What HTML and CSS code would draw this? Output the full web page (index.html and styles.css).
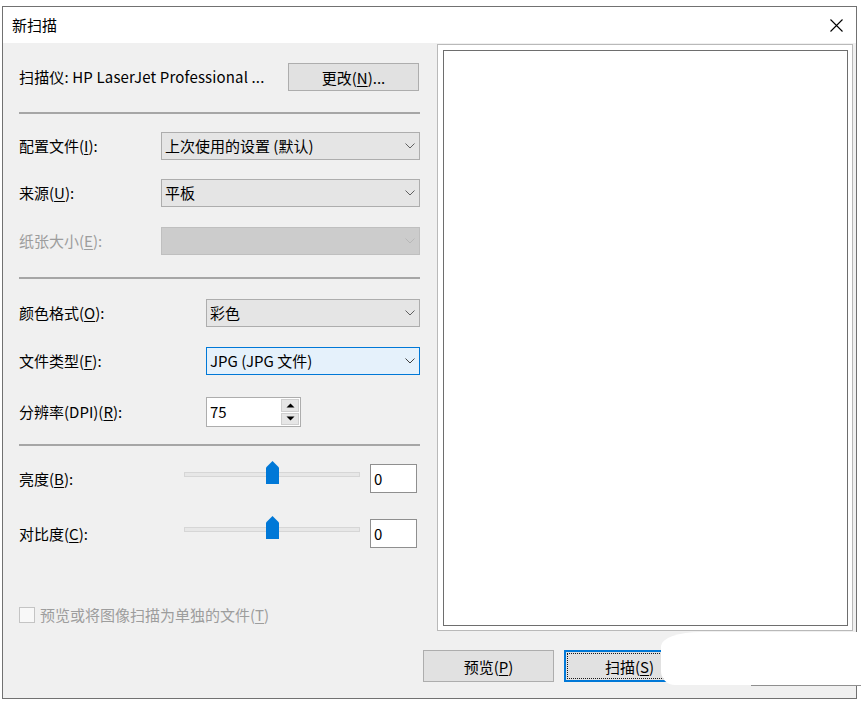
FILE: index.html
```html
<!DOCTYPE html>
<html lang="zh-CN">
<head>
<meta charset="utf-8">
<title>新扫描</title>
<link rel="stylesheet" href="styles.css">
</head>
<body>
<div class="window">
  <div class="titlebar">
    <span class="title">新扫描</span>
    <svg class="close" width="13" height="13" viewBox="0 0 13 13"><path d="M0.5 0.5L12.5 12.5M12.5 0.5L0.5 12.5" stroke="#000" stroke-width="1.1" fill="none"/></svg>
  </div>
  <div class="content">
    <div class="main">
      <div class="left">
        <div class="row scanner">
          <span class="label grow scanner-name">扫描仪: HP LaserJet Professional ...</span>
          <button class="btn change">更改(<u>N</u>)...</button>
        </div>
        <div class="sep m21"></div>

        <div class="row m18">
          <span class="label w1">配置文件(<u>I</u>):</span>
          <div class="combo"><span>上次使用的设置 (默认)</span><svg class="chev" width="10" height="6" viewBox="0 0 10 6"><path d="M0.5 0.5L5 5L9.5 0.5" stroke="#606060" fill="none"/></svg></div>
        </div>
        <div class="row m19">
          <span class="label w1">来源(<u>U</u>):</span>
          <div class="combo"><span>平板</span><svg class="chev" width="10" height="6" viewBox="0 0 10 6"><path d="M0.5 0.5L5 5L9.5 0.5" stroke="#606060" fill="none"/></svg></div>
        </div>
        <div class="row m20">
          <span class="label w1 disabled">纸张大小(<u>E</u>):</span>
          <div class="combo off"><span></span><svg class="chev" width="10" height="6" viewBox="0 0 10 6"><path d="M0.5 0.5L5 5L9.5 0.5" stroke="#b8b8b8" fill="none"/></svg></div>
        </div>
        <div class="sep m22"></div>

        <div class="row m20">
          <span class="label w2">颜色格式(<u>O</u>):</span>
          <div class="combo"><span>彩色</span><svg class="chev" width="10" height="6" viewBox="0 0 10 6"><path d="M0.5 0.5L5 5L9.5 0.5" stroke="#606060" fill="none"/></svg></div>
        </div>
        <div class="row m20">
          <span class="label w2">文件类型(<u>F</u>):</span>
          <div class="combo focus"><span>JPG (JPG 文件)</span><svg class="chev" width="10" height="6" viewBox="0 0 10 6"><path d="M0.5 0.5L5 5L9.5 0.5" stroke="#404040" fill="none"/></svg></div>
        </div>
        <div class="row m22 tall">
          <span class="label w2">分辨率(DPI)(<u>R</u>):</span>
          <div class="spin">
            <span class="spin-value">75</span>
            <div class="spin-btns">
              <span class="spin-btn"><svg width="9" height="5" viewBox="0 0 9 5"><path d="M0.5 4.5L4.5 0.5L8.5 4.5Z" fill="#000"/></svg></span>
              <span class="spin-btn"><svg width="9" height="5" viewBox="0 0 9 5"><path d="M0.5 0.5L4.5 4.5L8.5 0.5Z" fill="#000"/></svg></span>
            </div>
          </div>
        </div>
        <div class="sep m17"></div>

        <div class="row m18 srow">
          <span class="label w3">亮度(<u>B</u>):</span>
          <div class="slider">
            <div class="track"></div>
            <svg class="thumb" width="13" height="23" viewBox="0 0 13 23"><path d="M0 6.5L6.5 0L13 6.5V23H0Z" fill="#0078d7"/></svg>
          </div>
          <div class="valbox">0</div>
        </div>
        <div class="row m26 srow">
          <span class="label w3">对比度(<u>C</u>):</span>
          <div class="slider">
            <div class="track"></div>
            <svg class="thumb" width="13" height="23" viewBox="0 0 13 23"><path d="M0 6.5L6.5 0L13 6.5V23H0Z" fill="#0078d7"/></svg>
          </div>
          <div class="valbox">0</div>
        </div>

        <div class="row m59 chkrow">
          <span class="checkbox"></span>
          <span class="label disabled">预览或将图像扫描为单独的文件(<u>T</u>)</span>
        </div>
      </div>
      <div class="preview">
        <div class="preview-inner"></div>
      </div>
    </div>
    <div class="footer">
      <button class="btn big">预览(<u>P</u>)</button>
      <button class="btn big default">扫描(<u>S</u>)</button>
      <button class="btn big">取消</button>
    </div>
  </div>
</div>
<div class="watermark"></div>
</body>
</html>
```
FILE: styles.css
```css
html, body {
  margin: 0;
  padding: 0;
  background: #ffffff;
}
body {
  font-family: "Noto Sans CJK SC", "Noto Sans", sans-serif;
  font-size: 15px;
  color: #000;
  position: relative;
  width: 861px;
  height: 711px;
  overflow: hidden;
}
.window {
  margin: 6px 0 0 2px;
  width: 855px;
  height: 693px;
  box-sizing: border-box;
  border: 1px solid #717171;
  background: #f0f0f0;
  display: flex;
  flex-direction: column;
}
.titlebar {
  height: 36px;
  flex: none;
  background: #ffffff;
  display: flex;
  align-items: center;
  justify-content: space-between;
  padding: 0 13px 0 9px;
}
.title {
  line-height: 20px;
}
.content {
  flex: 1;
  display: flex;
  flex-direction: column;
}
.main {
  display: flex;
  height: 588px;
  flex: none;
}
.left {
  width: 434px;
  box-sizing: border-box;
  padding: 0 17px 0 16px;
  display: flex;
  flex-direction: column;
}
.row {
  display: flex;
  align-items: center;
  height: 28px;
  flex: none;
}
.row.tall { height: 30px; }
.row.srow { height: 29px; }
.scanner { margin-top: 20px; }
.scanner-name { letter-spacing: 0.15px; }
.m17 { margin-top: 17px; }
.m18 { margin-top: 18px; }
.m19 { margin-top: 19px; }
.m20 { margin-top: 20px; }
.m21 { margin-top: 21px; }
.m22 { margin-top: 22px; }
.m26 { margin-top: 26px; }
.m59 { margin-top: 59px; }
.label {
  white-space: nowrap;
  line-height: 20px;
}
.grow { flex: 1; }
.w1 { width: 142px; flex: none; }
.w2 { width: 187px; flex: none; }
.w3 { width: 165px; flex: none; }
.disabled { color: #9d9d9d; }
u { text-decoration-thickness: 1px; text-underline-offset: 2px; }
.sep {
  height: 2px;
  flex: none;
  background: #a6a6a6;
}
.btn {
  font-family: inherit;
  font-size: 15px;
  color: #000;
  background: #e1e1e1;
  border: 1px solid #adadad;
  box-sizing: border-box;
  padding: 0;
  margin: 0;
}
.change {
  width: 131px;
  height: 28px;
  margin-right: 1px;
}
.combo {
  flex: 1;
  height: 28px;
  box-sizing: border-box;
  border: 1px solid #adadad;
  background: #e5e5e5;
  display: flex;
  align-items: center;
  justify-content: space-between;
  padding: 0 4px 0 3px;
  line-height: 20px;
  white-space: nowrap;
}
.combo.off {
  background: #cccccc;
  border-color: #bfbfbf;
}
.combo.focus {
  background: #e5f1fb;
  border-color: #0078d7;
}
.chev { flex: none; }
.spin {
  width: 95px;
  height: 30px;
  box-sizing: border-box;
  border: 1px solid #adadad;
  background: #ffffff;
  display: flex;
}
.spin-value {
  flex: 1;
  padding-left: 3px;
  line-height: 28px;
}
.spin-btns {
  width: 19px;
  display: flex;
  flex-direction: column;
  padding: 1px 1px 1px 0;
  box-sizing: border-box;
  gap: 1px;
}
.spin-btn {
  flex: 1;
  background: #e6e6e6;
  border: 1px solid #cfcfcf;
  display: flex;
  align-items: center;
  justify-content: center;
}
.spin-btn svg { display: block; }
.slider {
  width: 176px;
  height: 29px;
  position: relative;
  flex: none;
}
.track {
  margin-top: 8px;
  height: 5px;
  box-sizing: border-box;
  background: #e7e7e7;
  border: 1px solid #d6d6d6;
}
.thumb {
  position: absolute;
  left: 82px;
  top: -3px;
}
.valbox {
  margin-left: 10px;
  width: 47px;
  height: 29px;
  box-sizing: border-box;
  border: 1px solid #8f8f8f;
  background: #ffffff;
  padding-left: 3px;
  line-height: 27px;
}
.chkrow { height: 16px; }
.checkbox {
  width: 16px;
  height: 16px;
  box-sizing: border-box;
  border: 1px solid #c4c4c4;
  background: #f8f8f8;
  margin-right: 5px;
  flex: none;
}
.preview {
  margin-top: 1px;
  width: 416px;
  height: 587px;
  box-sizing: border-box;
  border: 1px solid #b9b9b9;
  background: #ffffff;
  padding: 5px 4px 4px 5px;
  flex: none;
}
.preview-inner {
  height: 100%;
  box-sizing: border-box;
  border: 1px solid #6e6e6e;
  background: #ffffff;
}
.footer {
  flex: 1;
  display: flex;
  justify-content: flex-end;
  align-items: flex-start;
  gap: 10px;
  padding: 19px 20px 0 0;
}
.big {
  width: 131px;
  height: 32px;
}
.default {
  border: 2px solid #0078d7;
  outline: 1px dotted #1a1a1a;
  outline-offset: -4px;
}
.watermark {
  position: absolute;
  left: 661px;
  top: 632px;
  width: 200px;
  height: 53px;
  background: #ffffff;
  border-top-left-radius: 40px 14px;
  border-bottom-left-radius: 14px;
}
.watermark::after {
  content: "";
  position: absolute;
  left: 90px;
  right: 0;
  bottom: -1px;
  height: 1px;
  background: #8f8f8f;
}
```
